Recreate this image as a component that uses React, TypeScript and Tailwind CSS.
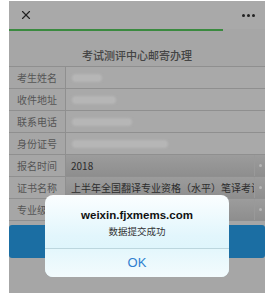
import { X } from 'lucide-react'

const rows = [
  { label: '考生姓名', blur: 'w-[30px]' },
  { label: '收件地址', blur: 'w-[44px]' },
  { label: '联系电话', blur: 'w-[60px]' },
  { label: '身份证号', blur: 'w-[96px]' },
]

const font = { fontFamily: '"Noto Sans CJK SC", "Liberation Sans", sans-serif' }

function SelectRow({ label, value }: { label: string; value: string }) {
  return (
    <div className="flex h-[22px] border-b border-[#8f8f8f]">
      <div className="w-[56px] shrink-0 flex items-center justify-center text-[10px] text-[#555]">{label}</div>
      <div className="flex-1 flex items-center bg-gradient-to-b from-[#9c9c9c] to-[#8e8e8e] border-l border-[#8f8f8f] min-w-0">
        <span className="flex-1 pl-[5px] text-[10px] text-[#2c2c2c] whitespace-nowrap overflow-hidden">{value}</span>
        <span className="w-[11px] h-full flex items-center justify-center border-l border-[#999]">
          <span className="w-[3px] h-[3px] rounded-full bg-[#b5b5b5]" />
        </span>
      </div>
    </div>
  )
}

export default function App() {
  return (
    <div className="w-[272px] h-[293px] bg-white pl-[9px] pr-[7px] pt-[1px] overflow-hidden relative" style={font}>
      <div className="h-full bg-[#a6a6a6] flex flex-col">
        {/* Top bar */}
        <div className="h-[28px] flex items-center justify-between pl-[10px] pr-[10px] bg-[#a9a9a9]">
          <X size={14} strokeWidth={2} className="text-[#222]" />
          <div className="flex gap-[2px]">
            <span className="w-[3px] h-[3px] rounded-full bg-[#222]" />
            <span className="w-[3px] h-[3px] rounded-full bg-[#222]" />
            <span className="w-[3px] h-[3px] rounded-full bg-[#222]" />
          </div>
        </div>
        <div className="h-[2px] w-[214px] bg-[#3a8a3f]" />

        <div className="h-[35px] flex items-end justify-center pb-[3px] text-[11px] font-medium text-[#444]">考试测评中心邮寄办理</div>

        {/* Form */}
        <div className="border-t border-[#8f8f8f]">
          {rows.map((r) => (
            <div key={r.label} className="flex h-[22px] border-b border-[#8f8f8f]">
              <div className="w-[56px] shrink-0 flex items-center justify-center text-[10px] text-[#555]">{r.label}</div>
              <div className="flex-1 flex items-center bg-[#a9a9a9] border-l border-[#8f8f8f] pl-[6px]">
                <span className={`${r.blur} h-[8px] rounded-sm bg-[#b6b6b6] blur-[1px]`} />
              </div>
            </div>
          ))}
          <SelectRow label="报名时间" value="2018" />
          <SelectRow label="证书名称" value="上半年全国翻译专业资格（水平）笔译考试" />
          <SelectRow label="专业级别" value="" />
        </div>

        <div className="mt-[4px] h-[33px] rounded-[3px] bg-[#1b6ea3]" />
      </div>

      {/* Alert dialog */}
      <div className="absolute left-[45px] top-[195px] w-[184px] h-[82px] rounded-[8px] overflow-hidden flex flex-col bg-gradient-to-b from-[#fbfeff] via-[#e2f6fc] to-[#d6f2fa]">
        <div className="h-[53px] flex flex-col items-center justify-center pt-[2px]">
          <div className="text-[11.5px] font-bold text-[#111] leading-[16px]" style={{ fontFamily: '"Liberation Sans", sans-serif' }}>weixin.fjxmems.com</div>
          <div className="text-[9.5px] text-[#333] leading-[14px] mt-[1px]">数据提交成功</div>
        </div>
        <div className="h-px bg-[#bcd6de]" />
        <div className="flex-1 flex items-center justify-center text-[13px] text-[#2f7fd0] bg-gradient-to-b from-[#e4f7fc] to-[#f3fbfd]" style={{ fontFamily: '"Liberation Sans", sans-serif' }}>OK</div>
      </div>
    </div>
  )
}
